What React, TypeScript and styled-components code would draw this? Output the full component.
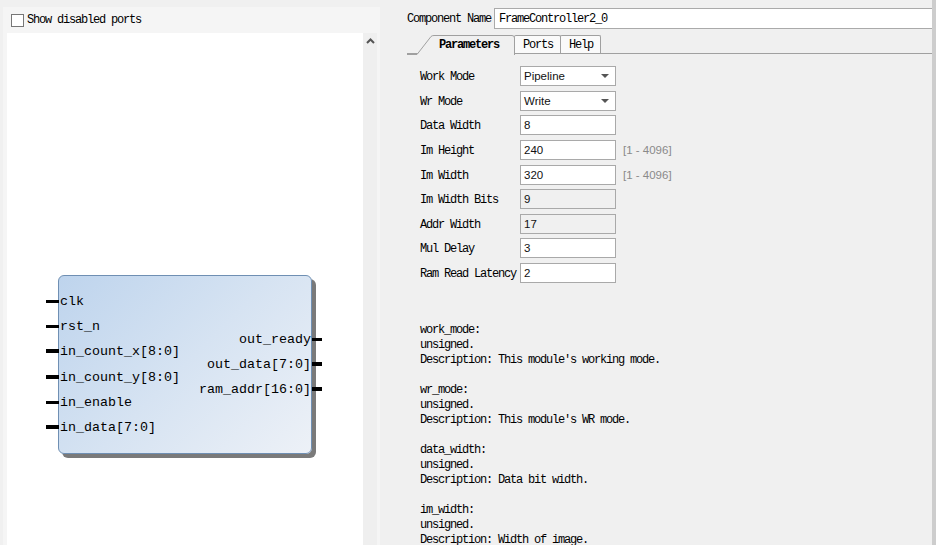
import React from "react";
import styled, { createGlobalStyle } from "styled-components";

const Global = createGlobalStyle`
  html, body { margin: 0; padding: 0; background: #f0f0f0; }
  body { font-family: "Liberation Mono", monospace; overflow: hidden; }
`;

const Page = styled.div`
  display: flex;
  width: 936px;
  height: 545px;
  overflow: hidden;
  background: #f0f0f0;
`;

const LeftFrame = styled.div`
  margin: 7px 0 0 3px;
  width: 377px;
  background: #f5f5f5;
  display: flex;
  flex-direction: column;
  padding: 0 3px 0 4px;
  box-sizing: border-box;
`;

const CheckRow = styled.label`
  display: flex;
  align-items: center;
  height: 26px;
  gap: 3px;
  padding-left: 4px;
  font-size: 12px;
  letter-spacing: -1.2px;
  color: #000;
`;

const CheckBox = styled.span`
  width: 11px;
  height: 11px;
  border: 1px solid #777;
  background: #fff;
`;

const ViewArea = styled.div`
  display: flex;
  flex: 1;
  background: #efefef;
`;

const Canvas = styled.div`
  position: relative;
  width: 356px;
  background: #fff;
`;

const ScrollCol = styled.div`
  width: 14px;
  display: flex;
  justify-content: center;
  padding-top: 5px;
`;

const Block = styled.div`
  position: absolute;
  left: 51px;
  top: 242px;
  width: 252px;
  height: 177px;
  border: 1px solid #6f8fb3;
  border-radius: 6px;
  background: linear-gradient(135deg, #bed4ed 0%, #d6e3f2 50%, #edf1f7 100%);
  box-shadow: 4px 4px 0 #7a7a7a;
`;

const PinRow = styled.div<{ $top: number; $side: "left" | "right" }>`
  position: absolute;
  top: ${(p) => p.$top}px;
  ${(p) => (p.$side === "left" ? "left: -13px;" : "right: -11px;")}
  display: flex;
  flex-direction: ${(p) => (p.$side === "left" ? "row" : "row-reverse")};
  align-items: center;
  height: 16px;
  font-family: "Liberation Mono", monospace;
  font-size: 13.33px;
  color: #000;
  white-space: nowrap;
`;

const Pin = styled.span<{ $bus: boolean; $side: "left" | "right" }>`
  display: block;
  width: ${(p) => (p.$side === "right" ? 10 : 13)}px;
  height: ${(p) => (p.$bus ? 4 : 3)}px;
  background: #000;
  margin: ${(p) => (p.$side === "right" ? "0 0 0 1px" : "0 1px 0 0")};
`;

const RightPane = styled.div`
  flex: 1;
  display: flex;
  flex-direction: column;
  padding: 8px 0 0 27px;
  position: relative;
`;

const EdgeStrip = styled.div`
  width: 4px;
  background: #cdcdcd;
`;

const NameRow = styled.div`
  display: flex;
  align-items: center;
  height: 21px;
  gap: 3px;
  font-size: 12px;
  letter-spacing: -1.2px;
`;

const NameInput = styled.div`
  flex: 1;
  height: 19px;
  border: 1px solid #aaa;
  border-right: none;
  background: #fff;
  display: flex;
  align-items: center;
  padding-left: 4px;
  font-size: 12px;
  letter-spacing: -1.2px;
`;

const TabBar = styled.div`
  display: flex;
  align-items: flex-end;
  height: 25px;
  margin-top: 6px;
  border-bottom: 1px solid #a0a0a0;
  position: relative;
`;

const ActiveTab = styled.div`
  position: relative;
  width: 108px;
  height: 19px;
  margin-bottom: -1px;
  display: flex;
  align-items: center;
  padding-left: 32px;
  box-sizing: border-box;
  font-size: 12px;
  font-weight: bold;
  letter-spacing: -1.2px;
  color: #000;
  svg { position: absolute; left: 0; top: 0; }
  span { position: relative; }
`;

const Tab = styled.div`
  height: 17px;
  border: 1px solid #a0a0a0;
  border-bottom: none;
  border-radius: 2px 2px 0 0;
  padding: 0 7px 0 8px;
  display: flex;
  align-items: center;
  font-size: 12px;
  letter-spacing: -1.2px;
  background: #fafafa;
  color: #000;
  margin-left: -1px;
`;

const Content = styled.div`
  flex: 1;
  background: #f0f0f0;
  padding: 12px 0 0 13px;
`;

const Form = styled.div`
  display: grid;
  grid-template-columns: 100px 96px auto;
  grid-auto-rows: 20px;
  row-gap: 4.625px;
  align-items: center;
  justify-content: start;
`;

const Label = styled.div`
  font-size: 12px;
  letter-spacing: -1.2px;
  color: #000;
  padding-top: 2px;
`;

const Field = styled.div<{ $ro?: boolean }>`
  height: 20px;
  box-sizing: border-box;
  border: 1px solid #a9a9a9;
  background: ${(p) => (p.$ro ? "#f0f0f0" : "#fff")};
  display: flex;
  align-items: center;
  justify-content: space-between;
  padding: 0 6px 0 3px;
  font-family: "Liberation Sans", Arial, sans-serif;
  font-size: 11.5px;
  color: #111;
`;

const Caret = styled.span`
  width: 0;
  height: 0;
  border-left: 4px solid transparent;
  border-right: 4px solid transparent;
  border-top: 4px solid #555;
`;

const Range = styled.div`
  padding-left: 7px;
  font-family: "Liberation Sans", Arial, sans-serif;
  font-size: 11.5px;
  color: #8a8a8a;
`;

const Desc = styled.div`
  margin-top: 40px;
  font-size: 12px;
  letter-spacing: -1.2px;
  line-height: 15px;
  color: #000;
  white-space: pre;
`;

type PinDef = { name: string; bus: boolean; top: number };

const leftPins: PinDef[] = [
  { name: "clk", bus: false, top: 17 },
  { name: "rst_n", bus: false, top: 42 },
  { name: "in_count_x[8:0]", bus: true, top: 67 },
  { name: "in_count_y[8:0]", bus: true, top: 93 },
  { name: "in_enable", bus: false, top: 118 },
  { name: "in_data[7:0]", bus: true, top: 143 },
];

const rightPins: PinDef[] = [
  { name: "out_ready", bus: false, top: 55 },
  { name: "out_data[7:0]", bus: true, top: 80 },
  { name: "ram_addr[16:0]", bus: true, top: 105 },
];

type Param = { label: string; value: string; select?: boolean; ro?: boolean; range?: string };

const params: Param[] = [
  { label: "Work Mode", value: "Pipeline", select: true },
  { label: "Wr Mode", value: "Write", select: true },
  { label: "Data Width", value: "8" },
  { label: "Im Height", value: "240", range: "[1 - 4096]" },
  { label: "Im Width", value: "320", range: "[1 - 4096]" },
  { label: "Im Width Bits", value: "9", ro: true },
  { label: "Addr Width", value: "17", ro: true },
  { label: "Mul Delay", value: "3" },
  { label: "Ram Read Latency", value: "2" },
];

const descText = `work_mode:
unsigned.
Description: This module's working mode.

wr_mode:
unsigned.
Description: This module's WR mode.

data_width:
unsigned.
Description: Data bit width.

im_width:
unsigned.
Description: Width of image.`;

export default function App() {
  return (
    <>
      <Global />
      <Page>
        <LeftFrame>
          <CheckRow>
            <CheckBox />
            Show disabled ports
          </CheckRow>
          <ViewArea>
            <Canvas>
              <Block>
                {leftPins.map((p) => (
                  <PinRow key={p.name} $top={p.top} $side="left">
                    <Pin $bus={p.bus} $side="left" />
                    {p.name}
                  </PinRow>
                ))}
                {rightPins.map((p) => (
                  <PinRow key={p.name} $top={p.top} $side="right">
                    <Pin $bus={p.bus} $side="right" />
                    {p.name}
                  </PinRow>
                ))}
              </Block>
            </Canvas>
            <ScrollCol>
              <svg width="9" height="6" viewBox="0 0 9 6">
                <path d="M1 5 L4.5 1.5 L8 5" fill="none" stroke="#555" strokeWidth="2" />
              </svg>
            </ScrollCol>
          </ViewArea>
        </LeftFrame>
        <RightPane>
          <NameRow>
            Component Name
            <NameInput>FrameController2_0</NameInput>
          </NameRow>
          <TabBar>
            <ActiveTab>
              <svg width="108" height="20" viewBox="0 0 108 20">
                <path d="M0 19.5 L10 19.5 L24 1.5 Q25 0.5 27 0.5 L105 0.5 Q107.5 0.5 107.5 3 L107.5 20" fill="#f0f0f0" stroke="#a0a0a0" strokeWidth="1" />
              </svg>
              <span>Parameters</span>
            </ActiveTab>
            <Tab>Ports</Tab>
            <Tab>Help</Tab>
          </TabBar>
          <Content>
            <Form>
              {params.map((p) => (
                <React.Fragment key={p.label}>
                  <Label>{p.label}</Label>
                  <Field $ro={p.ro}>
                    {p.value}
                    {p.select && <Caret />}
                  </Field>
                  {p.range ? <Range>{p.range}</Range> : <span />}
                </React.Fragment>
              ))}
            </Form>
            <Desc>{descText}</Desc>
          </Content>
        </RightPane>
        <EdgeStrip />
      </Page>
    </>
  );
}
